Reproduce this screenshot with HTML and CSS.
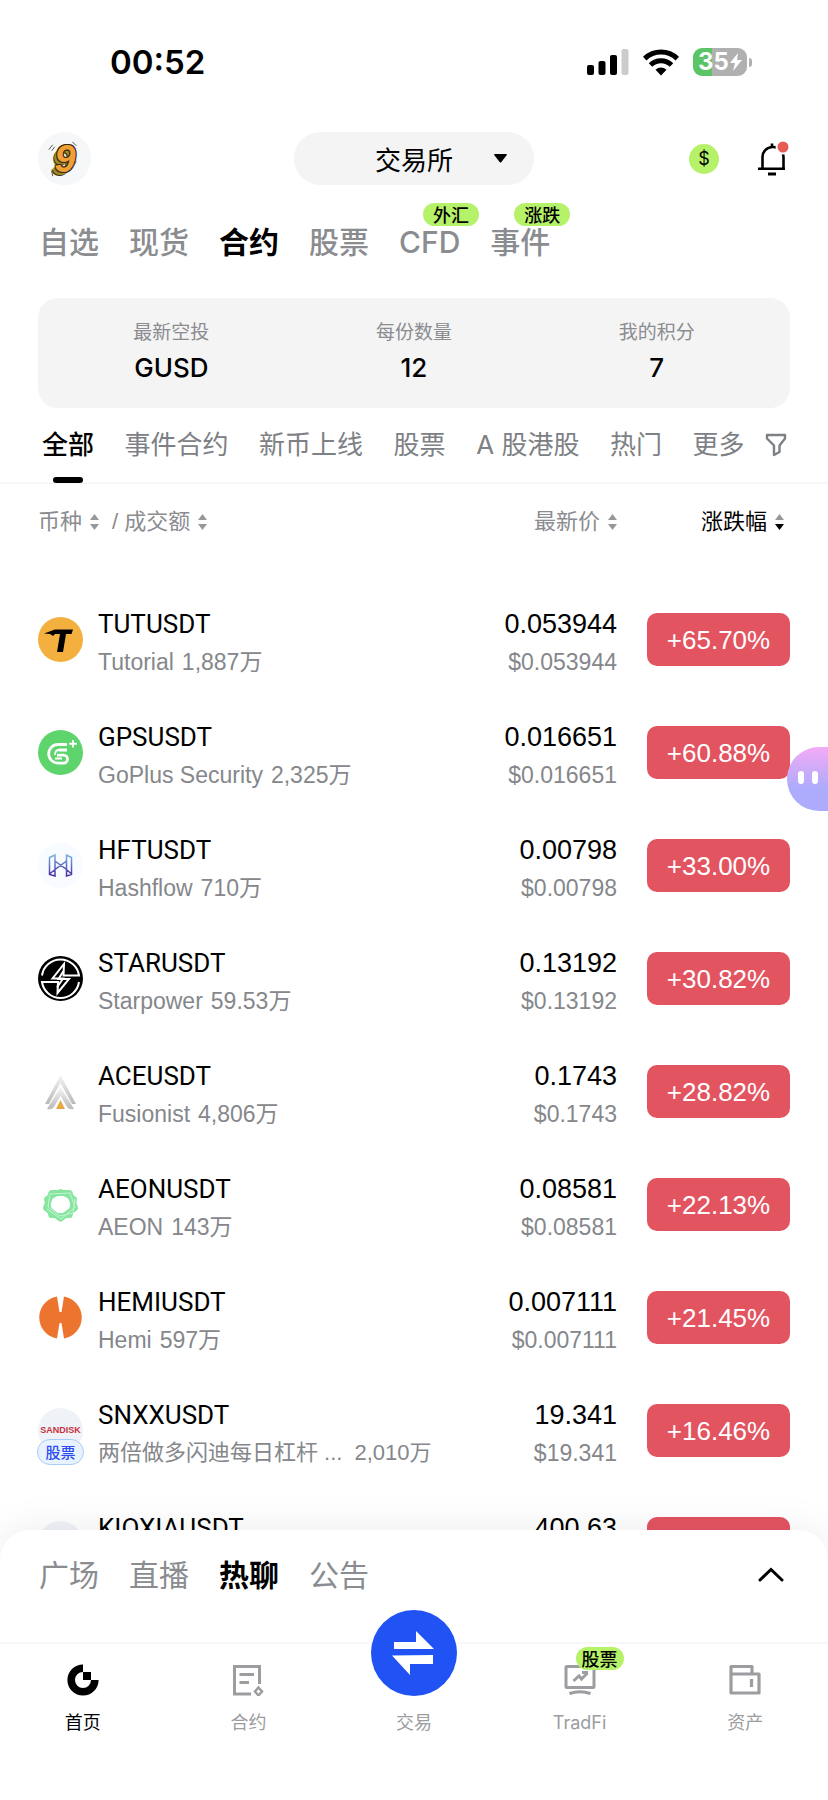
FILE: index.html
```html
<!DOCTYPE html>
<html lang="zh-CN">
<head>
<meta charset="utf-8">
<meta name="viewport" content="width=device-width, initial-scale=1">
<title>交易所</title>
<link rel="stylesheet" href="styles.css">
</head>
<body>
<div class="app">
  <div class="status">
    <span class="clock">00:52</span>
    <div class="status-icons">
      <svg width="42" height="27" viewBox="0 0 42 27" aria-hidden="true"><rect x="0" y="16" width="7" height="10" rx="2"/><rect x="11.500" y="12" width="7" height="14" rx="2"/><rect x="23" y="6" width="7" height="20" rx="2"/><rect x="34.500" y="0" width="7" height="26" rx="2" fill="#ccc"/></svg>
      <svg width="36" height="27" viewBox="0 0 36 27" aria-hidden="true"><g fill="none" stroke="#000" stroke-width="5"><path d="M1.700 9.600A23.500 23.500 0 0 1 34.300 9.600"/><path d="M7.500 16A15 15 0 0 1 28.500 16"/></g><path d="M12.500 20.800a8 8 0 0 1 11 0L18 26.500z"/></svg>
      <div class="battery"><span class="battery-body">35<svg width="12" height="18" viewBox="0 0 12 18" aria-hidden="true"><path d="M8 0 0 10h5L3 18l9-11H7z" fill="#fff"/></svg></span><span class="battery-tip"></span></div>
    </div>
  </div>

  <header class="topbar">
    <button class="avatar" type="button" aria-label="头像"><span class="avatar-nine">9</span>
      <svg class="avatar-ticks" viewBox="0 0 54 54" aria-hidden="true"><path d="M11 18l4-5M14 19l3-4M35 10l4 4M35 36l4-6M14 40l1 5" fill="none" stroke="#555"/></svg>
    </button>
    <button class="switcher" type="button"><span>交易所</span><svg width="13" height="9" viewBox="0 0 13 9" aria-hidden="true"><path d="M1 0h11q1.500 0 .6 1.200L7.400 8q-.9 1-1.800 0L.4 1.200Q-.5 0 1 0z"/></svg></button>
    <div class="top-actions">
      <button class="coin" type="button" aria-label="奖励">$</button>
      <button class="bell" type="button" aria-label="通知">
        <svg width="32" height="36" viewBox="0 0 32 36" aria-hidden="true"><path d="M4.500 27V16.500a10 10 0 0 1 10-10.500h1a10 10 0 0 1 10 10.500V27M0 27.700h27M14 2.500v4" fill="none" stroke="#000" stroke-width="2.600"/><path d="M10 31.500h8v3h-8z"/><circle cx="25" cy="6" r="7.500" fill="#fff"/><circle cx="25" cy="6" r="5.500" fill="#e65c55"/></svg>
      </button>
    </div>
  </header>

  <nav class="markets">
    <a href="#">自选</a><a href="#">现货</a><a href="#" class="on">合约</a><a href="#">股票</a><a href="#">CFD<span class="tag">外汇</span></a><a href="#">事件<span class="tag">涨跌</span></a>
  </nav>

  <dl class="card">
    <div><dt>最新空投</dt><dd>GUSD</dd></div>
    <div><dt>每份数量</dt><dd>12</dd></div>
    <div><dt>我的积分</dt><dd>7</dd></div>
  </dl>

  <nav class="filters">
    <a href="#" class="on">全部</a><a href="#">事件合约</a><a href="#">新币上线</a><a href="#">股票</a><a href="#">A 股港股</a><a href="#">热门</a><a href="#">更多</a>
    <button type="button" aria-label="筛选"><svg width="22" height="24" viewBox="0 0 22 24" aria-hidden="true"><path d="M2 2h18v3.500l-5.500 7V19L9 22v-9.500L2 5.500z" fill="none" stroke="#7d8084" stroke-width="2.400" stroke-linejoin="round"/></svg></button>
  </nav>

  <main class="list">
    <table>
      <thead>
        <tr>
          <th class="pair"><span class="sort">币种<svg class="arrows" viewBox="0 0 9 16" aria-hidden="true"><path d="M4.500 0 9 6H0z"/><path d="M0 10h9l-4.500 6z"/></svg></span><span class="slash">/</span><span class="sort">成交额<svg class="arrows" viewBox="0 0 9 16" aria-hidden="true"><path d="M4.500 0 9 6H0z"/><path d="M0 10h9l-4.500 6z"/></svg></span></th>
          <th class="price"><span class="sort">最新价<svg class="arrows" viewBox="0 0 9 16" aria-hidden="true"><path d="M4.500 0 9 6H0z"/><path d="M0 10h9l-4.500 6z"/></svg></span></th>
          <th class="change"><span class="sort dark">涨跌幅<svg class="arrows" viewBox="0 0 9 16" aria-hidden="true"><path d="M4.500 0 9 6H0z"/><path class="active" d="M0 10h9l-4.500 6z"/></svg></span></th>
        </tr>
      </thead>
      <tbody>
        <tr>
          <td class="pair"><div class="coin-cell"><span class="logo logo-tut"><svg viewBox="0 0 45 45" aria-hidden="true"><path d="M6 16.500l11-4h18l-1.500 4.500H28L25 35h-6l3-18h-5l-2 2-3-2z"/></svg></span><div class="text"><b>TUTUSDT</b><small><span>Tutorial</span><span>1,887万</span></small></div></div></td>
          <td class="price"><b>0.053944</b><small>$0.053944</small></td>
          <td class="change"><span class="pct">+65.70%</span></td>
        </tr>
        <tr>
          <td class="pair"><div class="coin-cell"><span class="logo logo-gps"><svg viewBox="0 0 45 45" aria-hidden="true"><path d="M29 14.500H20a9.300 9.300 0 0 0 0 18.600h5.500a4 4 0 0 0 0-8H19M29 20h-8.500" fill="none" stroke="#fff" stroke-width="2.800"/><path d="M29 20h-8q-4 0-4 5M17 28.500h7" fill="none" stroke="#fff" stroke-width="1.800"/><path d="M35 10v7.500M31.200 13.700h7.600" stroke="#fff" stroke-width="2"/></svg></span><div class="text"><b>GPSUSDT</b><small><span>GoPlus Security</span><span>2,325万</span></small></div></div></td>
          <td class="price"><b>0.016651</b><small>$0.016651</small></td>
          <td class="change"><span class="pct">+60.88%</span></td>
        </tr>
        <tr>
          <td class="pair"><div class="coin-cell"><span class="logo logo-hft"><svg viewBox="0 0 45 45" aria-hidden="true"><defs><linearGradient id="hft" x1="0" y1="0" x2="0" y2="1"><stop offset="0" stop-color="#79b4dc"/><stop offset="1" stop-color="#4a2aa0"/></linearGradient></defs><path d="M11.500 14.500l5.500-2.500v6l11.500 8.500V33l5-1.500v-17L28.500 12v6L17 26.500V33l-5.500-1.500zM17 18v8.500M28.500 18v8.500M11.500 31l5.500-4.500M33.500 31l-5-4.500" fill="none" stroke="url(#hft)" stroke-width="1.500"/></svg></span><div class="text"><b>HFTUSDT</b><small><span>Hashflow</span><span>710万</span></small></div></div></td>
          <td class="price"><b>0.00798</b><small>$0.00798</small></td>
          <td class="change"><span class="pct">+33.00%</span></td>
        </tr>
        <tr>
          <td class="pair"><div class="coin-cell"><span class="logo logo-star"><svg viewBox="0 0 45 45" aria-hidden="true"><g fill="none" stroke="#fff" stroke-width="2"><path d="M4 19.500A18.700 18.700 0 0 1 41 19.500H25.500L26 8 14.500 22.500H25l-6 9"/><path d="M41 26A18.700 18.700 0 0 1 4 26H20l-.5 11L31 23H20.500l5-8"/></g></svg></span><div class="text"><b>STARUSDT</b><small><span>Starpower</span><span>59.53万</span></small></div></div></td>
          <td class="price"><b>0.13192</b><small>$0.13192</small></td>
          <td class="change"><span class="pct">+30.82%</span></td>
        </tr>
        <tr>
          <td class="pair"><div class="coin-cell"><span class="logo"><svg viewBox="0 0 45 45" aria-hidden="true"><defs><linearGradient id="ace" x1="0" y1="0" x2="0" y2="1"><stop offset="0" stop-color="#f6f6f6"/><stop offset="1" stop-color="#b9b9b9"/></linearGradient></defs><path d="M22.500 6 38 35h-4L22.500 14 11 35H7z" fill="url(#ace)"/><path d="M22.500 18 36 40q-5 1-7-2l-6.500-11-6.500 11q-2 3-7 2z" fill="url(#ace)"/><path d="M22.500 31 27 40h-9z" fill="#eaa544"/></svg></span><div class="text"><b>ACEUSDT</b><small><span>Fusionist</span><span>4,806万</span></small></div></div></td>
          <td class="price"><b>0.1743</b><small>$0.1743</small></td>
          <td class="change"><span class="pct">+28.82%</span></td>
        </tr>
        <tr>
          <td class="pair"><div class="coin-cell"><span class="logo"><svg viewBox="0 0 45 45" aria-hidden="true"><path d="M13.500 11h18l5.500 15-14.500 10.500L8 26z" fill="none" stroke="#86e59f" stroke-width="6" stroke-linejoin="round"/><path d="M22.500 9.500 36.500 17 32 33.500H13L8.500 17z" fill="none" stroke="#86e59f" stroke-width="5" stroke-linejoin="round"/><path d="M12 12 32 11l5 14-14 12L9 27M12 12l-2 13 12 9 13-3 2-14" fill="none" stroke="#c4f5d0" stroke-width="1"/></svg></span><div class="text"><b>AEONUSDT</b><small><span>AEON</span><span>143万</span></small></div></div></td>
          <td class="price"><b>0.08581</b><small>$0.08581</small></td>
          <td class="change"><span class="pct">+22.13%</span></td>
        </tr>
        <tr>
          <td class="pair"><div class="coin-cell"><span class="logo"><svg viewBox="0 0 45 45" aria-hidden="true"><path d="M19 1.500A21.300 21.300 0 0 0 19 43.500L21.500 28h2L26 43.500A21.300 21.300 0 0 0 26 1.500L23.500 17h-2z" fill="#ec742f"/></svg></span><div class="text"><b>HEMIUSDT</b><small><span>Hemi</span><span>597万</span></small></div></div></td>
          <td class="price"><b>0.007111</b><small>$0.007111</small></td>
          <td class="change"><span class="pct">+21.45%</span></td>
        </tr>
        <tr>
          <td class="pair"><div class="coin-cell"><span class="logo logo-pale"><span class="brand">SANDISK</span><span class="stock">股票</span></span><div class="text"><b>SNXXUSDT</b><small class="wide"><span>两倍做多闪迪每日杠杆 ...</span><span>2,010万</span></small></div></div></td>
          <td class="price"><b>19.341</b><small>$19.341</small></td>
          <td class="change"><span class="pct">+16.46%</span></td>
        </tr>
        <tr>
          <td class="pair"><div class="coin-cell"><span class="logo logo-pale"></span><div class="text"><b>KIOXIAUSDT</b></div></div></td>
          <td class="price"><b>400.63</b></td>
          <td class="change"><span class="pct"></span></td>
        </tr>
      </tbody>
    </table>
  </main>

  <section class="sheet">
    <nav class="feeds">
      <a href="#">广场</a><a href="#">直播</a><a href="#" class="on">热聊</a><a href="#">公告</a>
      <button type="button" aria-label="展开"><svg width="26" height="16" viewBox="0 0 26 16" aria-hidden="true"><path d="M2 13 13 2.500 24 13" fill="none" stroke="#000" stroke-width="3" stroke-linecap="round"/></svg></button>
    </nav>
    <nav class="tabbar">
      <a href="#" class="on"><span class="glyph"><svg width="32" height="32" viewBox="0 0 32 32" aria-hidden="true"><path d="M16 4.200A11.800 11.800 0 1 0 27.800 16" fill="none" stroke="#000" stroke-width="7.600"/><path d="M16 8h8v8h-8z"/></svg></span>首页</a>
      <a href="#"><span class="glyph"><svg width="32" height="32" viewBox="0 0 32 32" aria-hidden="true"><g fill="none" stroke="#9b9da0" stroke-width="3"><path d="M19 30H2.500V2.500h25V20M7.500 10.500H22M7.500 18.500H17"/><path d="M26.500 23.500 30 27.500l-3.500 4L23 27.500z" stroke-width="2.500"/></g></svg></span>合约</a>
      <a href="#"><span class="trade"><svg width="43" height="44" viewBox="0 0 43 44" aria-hidden="true"><path d="M2 11h22V0l18 18H2zM41 24v9H18v11L0 24.500z" fill="#fff"/></svg></span>交易</a>
      <a href="#"><span class="glyph"><svg width="32" height="32" viewBox="0 0 32 32" aria-hidden="true"><g fill="none" stroke="#9b9da0" stroke-width="3"><rect x="2" y="2.500" width="28" height="21" rx="1"/><path d="M5.500 29.500q10.500-3.500 21 0M9.500 17l5.500-5 2.500 3 6-6M18 8.500h6"/></g></svg><span class="tag">股票</span></span>TradFi</a>
      <a href="#"><span class="glyph"><svg width="32" height="32" viewBox="0 0 32 32" aria-hidden="true"><path d="M2 10h28v19H2V2.500h21V10M22.500 15v8" fill="none" stroke="#9b9da0" stroke-width="3.200" stroke-linejoin="round"/></svg></span>资产</a>
    </nav>
  </section>

  <button class="helper" type="button" aria-label="助手"><i></i><i></i></button>
</div>
</body>
</html>
```
FILE: styles.css
```css
* { box-sizing: border-box; }

body {
  margin: 0;
  background: #fff;
  color: #000;
  font-family: "Liberation Sans", "Noto Sans CJK SC", sans-serif;
}

a { color: inherit; text-decoration: none; }

button {
  padding: 0;
  border: 0;
  background: none;
  color: inherit;
  font: inherit;
}

svg { display: block; }

.app {
  position: relative;
  display: flex;
  flex-direction: column;
  height: 100vh;
  overflow: hidden;
}

/* status bar */
.status {
  display: flex;
  align-items: center;
  justify-content: space-between;
  height: 124px;
  padding: 0 76px 0 110px;
}

.clock { font: 600 33px/40px Inter, sans-serif; }

.status-icons { display: flex; align-items: center; gap: 14px; }

.battery { display: flex; align-items: center; gap: 2px; }

.battery-body {
  display: flex;
  align-items: center;
  justify-content: center;
  gap: 1px;
  width: 54px;
  height: 28px;
  border-radius: 9px;
  background: linear-gradient(90deg, #5ac466 36%, #b0b0b0 36%);
  color: #fff;
  font: 700 24px/28px Inter, sans-serif;
}

.battery-tip { width: 3px; height: 9px; border-radius: 0 3px 3px 0; background: #b0b0b0; }

/* top bar */
.topbar {
  display: grid;
  grid-template-columns: 1fr 240px 1fr;
  align-items: center;
  margin-top: 8px;
  padding: 0 38px;
}

.avatar {
  position: relative;
  width: 53px;
  height: 53px;
  border-radius: 50%;
  background: #f6f7f8;
}

.avatar-nine {
  display: block;
  padding-left: 1px;
  color: #f0a035;
  font: italic 700 38px/48px "Liberation Sans", sans-serif;
  text-shadow: 1px -1px #3a2a10, 1px 1px #3a2a10, -1px 1px #3a2a10, -1px -1px #3a2a10, -2px 2px #9c8a28, -3px 3px #9c8a28, -4px 4px #4a3a14;
}

.avatar-ticks { position: absolute; inset: 0; }

.switcher {
  display: flex;
  align-items: center;
  justify-content: flex-end;
  gap: 41px;
  height: 53px;
  padding-right: 27px;
  border-radius: 27px;
  background: #f4f4f4;
  font-size: 26px;
}

.top-actions { display: flex; align-items: center; justify-content: flex-end; gap: 39px; }

.coin {
  width: 30px;
  height: 30px;
  border-radius: 50%;
  background: #b5f26a;
  font: 400 18px/30px Inter, sans-serif;
}

/* market tabs */
.markets, .feeds {
  display: flex;
  gap: 30px;
  padding: 0 38px;
  color: #8a8c90;
  font: 500 30px/44px Inter, "Noto Sans CJK SC", sans-serif;
}

.markets { margin-top: 35px; padding-left: 39px; }
.markets .on, .feeds .on { color: #000; font-weight: 600; }
.markets a { position: relative; }

.tag {
  position: absolute;
  padding: 0 10px;
  border-radius: 12px;
  background: #b5f26a;
  color: #000;
  font: 500 18px/23px "Noto Sans CJK SC", sans-serif;
  white-space: nowrap;
}

.markets .tag { top: -17px; left: 24px; }

/* airdrop card */
.card {
  display: grid;
  grid-template-columns: repeat(3, 1fr);
  margin: 34px 38px 0;
  padding: 19px 12px 21px;
  border-radius: 20px;
  background: #f4f4f4;
  text-align: center;
}

.card dt { color: #8a8c90; font-size: 19px; line-height: 32px; }
.card dd { margin: 0; font: 500 26px/38px Inter, sans-serif; }

/* filter tabs */
.filters {
  display: flex;
  align-items: center;
  justify-content: space-between;
  height: 76px;
  padding: 0 41px 0 42px;
  border-bottom: 2px solid #f7f7f7;
  color: #7d8084;
  font: 400 26px/40px Inter, "Noto Sans CJK SC", sans-serif;
}

.filters a { position: relative; }
.filters .on { color: #000; font-weight: 500; }

.filters .on::after {
  content: "";
  position: absolute;
  left: 11px;
  bottom: -18px;
  width: 30px;
  height: 6px;
  border-radius: 3px;
  background: #000;
}

.filters a:nth-of-type(7) { margin-right: -10px; }

/* quotes */
.list { flex: 1; min-height: 0; overflow: hidden; padding: 0 38px; }

table { width: 100%; border-collapse: collapse; table-layout: fixed; }

th, td { padding: 0; vertical-align: top; }

th {
  height: 99px;
  padding-top: 22px;
  color: #8a8c90;
  font-size: 22px;
  font-weight: 400;
  line-height: 32px;
}

th.pair { text-align: left; }
.price { width: 240px; text-align: right; }
.change { width: 173px; text-align: right; }
th.change { padding-right: 6px; }

.sort { display: inline-flex; align-items: center; gap: 8px; }
.slash { margin: 0 6px 0 13px; }
.dark { color: #000; }
.arrows { width: 9px; height: 16px; fill: #96989c; }
.arrows .active { fill: #000; }

tbody tr { height: 113px; }
tbody td { padding-top: 22px; }

.coin-cell { display: flex; gap: 15px; }

.logo {
  position: relative;
  flex: none;
  width: 45px;
  height: 45px;
  margin-top: 12px;
  border-radius: 50%;
}

.logo-tut { background: #f3b03e; }
.logo-gps { background: #5ed46c; }
.logo-hft { background: #f8fbff; }
.logo-star { background: #000; }
.logo-pale { background: #eff3f8; }

.brand {
  display: block;
  color: #c8323e;
  font: 700 9px/45px "Liberation Sans", sans-serif;
  text-align: center;
}

.stock {
  position: absolute;
  left: -1px;
  top: 31px;
  width: 47px;
  border: 1px solid #a9cdf8;
  border-radius: 13px;
  background: #e9f3ff;
  color: #2c4bf0;
  font: 500 15px/24px "Noto Sans CJK SC", sans-serif;
  text-align: center;
}

td b {
  display: block;
  font: 400 26px/38px Roboto, sans-serif;
}

td.price b { font-family: "Liberation Sans", sans-serif; font-size: 27px; }

td small {
  display: block;
  color: #85878b;
  font-size: 23px;
  line-height: 38px;
}

.text small { display: flex; gap: 8px; white-space: nowrap; }
.text .wide { gap: 12px; font-size: 22px; }

td.change { padding-top: 30px; }

.pct {
  display: block;
  height: 53px;
  margin-left: 30px;
  border-radius: 10px;
  background: #e35461;
  color: #fff;
  font-size: 26px;
  line-height: 54px;
  text-align: center;
}

/* bottom sheet */
.sheet {
  position: relative;
  border-radius: 30px 30px 0 0;
  background: #fff;
  box-shadow: 0 0 40px rgba(0, 0, 0, 0.08);
}

.feeds { height: 112px; padding-top: 23px; padding-left: 39px; }
.feeds a { font-weight: 400; }
.feeds button { height: 44px; margin-left: auto; padding-right: 6px; }

.tabbar {
  display: grid;
  grid-template-columns: repeat(5, 1fr);
  height: 158px;
  border-top: 2px solid #f7f7f7;
  color: #9b9da0;
  font: 400 18px/26px Inter, "Noto Sans CJK SC", sans-serif;
}

.tabbar a {
  display: flex;
  flex-direction: column;
  align-items: center;
  gap: 14px;
  padding-top: 20px;
}

.tabbar .on { color: #000; }
.glyph { position: relative; height: 32px; }
.glyph .tag { left: 12px; top: -17px; padding: 0 6px; }

.trade {
  display: grid;
  place-items: center;
  width: 86px;
  height: 86px;
  margin-top: -54px;
  border-radius: 50%;
  background: #2152f3;
}

/* floating assistant */
.helper {
  position: absolute;
  right: 0;
  top: 747px;
  display: flex;
  gap: 8px;
  width: 41px;
  height: 64px;
  padding: 24px 0 0 11px;
  border-radius: 32px 0 0 32px;
  background: linear-gradient(#f3abf7, #adabfb 65%);
}

.helper i { width: 6px; height: 13px; border-radius: 3px; background: #fff; }
```
